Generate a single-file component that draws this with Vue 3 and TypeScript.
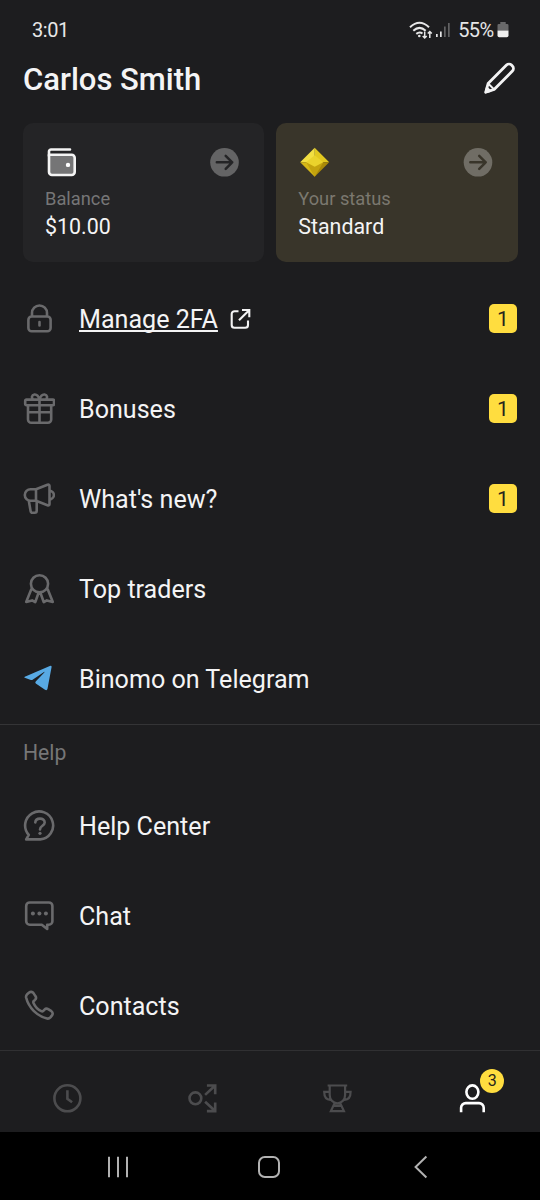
<script setup lang="ts">
interface MenuItem {
  label: string
  icon: string
  badge?: number
  external?: boolean
}

const mainItems: MenuItem[] = [
  { label: 'Manage 2FA', icon: 'lock', badge: 1, external: true },
  { label: 'Bonuses', icon: 'gift', badge: 1 },
  { label: "What's new?", icon: 'megaphone', badge: 1 },
  { label: 'Top traders', icon: 'award' },
  { label: 'Binomo on Telegram', icon: 'telegram' },
]

const helpItems: MenuItem[] = [
  { label: 'Help Center', icon: 'help' },
  { label: 'Chat', icon: 'chat' },
  { label: 'Contacts', icon: 'phone' },
]

const sections = [
  { title: '', items: mainItems },
  { title: 'Help', items: helpItems },
]

const icons: Record<string, string> = {
  lock: 'M9 13.5V10a7.5 7.5 0 0 1 15 0v3.5M8.7 13.5h15.6a3.3 3.3 0 0 1 3.3 3.3v8.2a3.3 3.3 0 0 1-3.3 3.3H8.7a3.3 3.3 0 0 1-3.3-3.3v-8.2a3.3 3.3 0 0 1 3.3-3.3ZM16.5 19v3.5',
  gift: 'M3.4 6.6h26.4a1.2 1.2 0 0 1 1.2 1.2v3.3a1.2 1.2 0 0 1-1.2 1.2H3.4a1.2 1.2 0 0 1-1.2-1.2V7.8a1.2 1.2 0 0 1 1.2-1.2ZM5 12.3v14.2a3.3 3.3 0 0 0 3.3 3.3h16.6a3.3 3.3 0 0 0 3.3-3.3V12.3M16.5 6.6v23.2M5 19.2h23.2M16.5 6.6C15.5 3 13.5 1.3 11.4 1.5 8.7 1.8 8.2 5 10.2 6.6M16.5 6.6c1-3.6 3-5.3 5.1-5.1 2.7.3 3.2 3.5 1.2 5.1',
  megaphone: 'M13 6.2H7.6a5.8 5.8 0 0 0 0 11.6H13ZM13 6.2l11.5-4.4q2-.6 2 1.3v17.8q0 1.9-2 1.3L13 17.8M26.5 7.5c2 .4 4.4 2.2 4.4 4.6s-2.4 4.2-4.4 4.6M5.8 17.8l1.8 10.3a2 2 0 0 0 2 1.7h2.1a2 2 0 0 0 2-2v-10',
  award: 'M16.5 2.2a8.6 8.6 0 1 1 0 17.2 8.6 8.6 0 0 1 0-17.2ZM8.4 16.1 3.2 28.9l5.9-1.5 3.1 1.8 3.4-9.4M24.6 16.1l5.2 12.8-5.9-1.5-3.1 1.8-3.4-9.4',
  telegram: 'M1.8 13.7 26.8 2.9q2-.7 1.8 1.2l-4.1 21.7q-.5 2.2-2.5 1L12.8 20.4q-1-.8-.1-1.8l8.6-9.2q.5-.7-.3-.5L9.6 16.7q-.8.5-1.7.2L1.7 14.8q-1-.4.1-1.1Z',
  help: 'M3.2 29.4 5.8 24.9A14 14 0 1 1 17.3 29.4H3.2ZM12.3 12.4c.4-5.2 9.4-5 9.4.1 0 3.3-4.7 3.2-4.7 6.9',
  chat: 'M6.7 2.5h19.2a3.5 3.5 0 0 1 3.5 3.5v15.2a3.5 3.5 0 0 1-3.5 3.5h-1.7v4.3l-5.4-4.3H6.7a3.5 3.5 0 0 1-3.5-3.5V6A3.5 3.5 0 0 1 6.7 2.5Z',
  phone: 'M4.1 4.3 6.2 2.5a2.9 2.9 0 0 1 4.1.4l2.1 3.2a2.9 2.9 0 0 1-.4 3.8l-1.2 1c-.5.6-.6 1.3-.3 2 1.6 3.7 4.2 6.5 7.8 8.3.7.4 1.5.2 2-.3l1.2-1.3a2.9 2.9 0 0 1 3.7-.4l3.2 2a2.9 2.9 0 0 1 .6 4.2l-1.6 2a3.6 3.6 0 0 1-3.3 1.1C13.7 25.9 5.7 17.7 3.1 7.5a3.6 3.6 0 0 1 1-3.2Z',
}
</script>

<template>
  <div class="screen">
    <header class="status-bar">
      <span class="time">3:01</span>
      <div class="status-right">
        <svg class="wifi" width="25" height="20" viewBox="0 0 25 20" fill="none" stroke="#e6e6e7" stroke-width="2">
          <path d="M1 7.2Q10.5-1.6 20 7.2M4.3 10.7q6.2-5.7 12.4 0M7.3 13.9q3.2-2.6 6.2-.4" />
          <circle cx="10.3" cy="16" r="1.3" fill="#e6e6e7" stroke="none" />
          <path d="M15.7 11.5v6.5m-2-2 2 2 2-2M20.8 18v-6.5m-2 2 2-2 2 2" stroke-width="1.5" />
        </svg>
        <svg class="signal" width="16" height="18" viewBox="0 0 16 18">
          <path d="M1 13h1.7v3H1zM5 10.5h1.7V16H5z" fill="#e6e6e7" />
          <path d="M9 5.500h1.700V16H9zM13 2h1.700v14H13z" fill="#626263" />
        </svg>
        <span class="percent">55%</span>
        <svg class="battery" width="12" height="16" viewBox="0 0 12 16">
          <path d="M3.3 0h5.4v2h1.5a1.3 1.3 0 0 1 1.3 1.3V8.5H.5V3.3A1.3 1.3 0 0 1 1.8 2h1.5Z" fill="#69696a" />
          <path d="M.5 8.5h11v5a1.7 1.7 0 0 1-1.7 1.7H2.2A1.7 1.7 0 0 1 .5 13.5Z" fill="#efefef" />
        </svg>
      </div>
    </header>

    <div class="profile">
      <h1>Carlos Smith</h1>
      <svg class="edit" width="34" height="34" viewBox="0 0 34 34" fill="none" stroke="#f3f3f4" stroke-width="2.8" stroke-linejoin="round">
        <path d="m2.7 30.300 2.400-8.800L23.500 3.100a3.600 3.600 0 0 1 5 0l.9.9a3.600 3.600 0 0 1 0 5L11.100 27.400Z" />
        <path d="m5.100 21.500 6 5.900M2.700 30.300l1.200-4.700 3.500 3.400Z" stroke-width="2" />
      </svg>
    </div>

    <div class="cards">
      <section class="card">
        <div class="card-top">
          <svg width="32" height="32" viewBox="0 0 32 32" fill="none" stroke="#f4f4f4" stroke-width="2.6" stroke-linecap="round" stroke-linejoin="round">
            <path d="M25 3.500H6a2 2 0 0 0-2 2V10" />
            <path d="M4 8.800h22.700a3 3 0 0 1 3 3V26a3 3 0 0 1-3 3H7a3 3 0 0 1-3-3Z" fill="#757576" />
            <circle cx="23" cy="18.900" r="2.200" fill="#fff" stroke="none" />
          </svg>
          <svg class="go" width="30" height="30" viewBox="0 0 30 30">
            <circle cx="15.500" cy="15.300" r="14.300" fill="#646465" />
            <path d="M7.800 15.300h15.400m-6.500-6.500 6.500 6.500-6.500 6.500" fill="none" stroke="#242426" stroke-width="2.500" stroke-linecap="round" stroke-linejoin="round" />
          </svg>
        </div>
        <p class="caption">Balance</p>
        <p class="value">$10.00</p>
      </section>
      <section class="card status">
        <div class="card-top">
          <svg width="32" height="32" viewBox="0 0 32 32">
            <path d="M16.700 1.700 31.200 16.200H16.700Z" fill="#e2c81f" />
            <path d="M16.700 1.700 2.200 16.200h14.500Z" fill="#f2df42" />
            <path d="M2.200 16.200 16.700 30.700V16.200Z" fill="#d6b817" />
            <path d="M31.200 16.200 16.700 30.700V16.200Z" fill="#a98a09" />
            <path d="M16.700 19 8.100 16.200l8.600 14.500 8.600-14.500Z" fill="#c3a30e" />
            <path d="m16.700 9.300 8.600 6.900-8.600 4.500-8.600-4.500Z" fill="#ead32c" />
          </svg>
          <svg class="go" width="30" height="30" viewBox="0 0 30 30">
            <circle cx="15" cy="15.300" r="14.300" fill="#706d65" />
            <path d="M7.300 15.300h15.400m-6.500-6.500 6.500 6.500-6.500 6.500" fill="none" stroke="#39352a" stroke-width="2.500" stroke-linecap="round" stroke-linejoin="round" />
          </svg>
        </div>
        <p class="caption">Your status</p>
        <p class="value">Standard</p>
      </section>
    </div>

    <main>
      <section v-for="section in sections" :key="section.title" class="group">
        <h2 v-if="section.title">{{ section.title }}</h2>
        <div v-for="item in section.items" :key="item.label" class="row">
          <svg class="row-icon" :class="item.icon" width="32" height="32" viewBox="0 0 32 32">
            <path :d="icons[item.icon]" />
            <circle v-if="item.icon === 'help'" class="dot" cx="17" cy="23.300" r="1.600" />
            <g v-if="item.icon === 'chat'" class="dot">
              <circle cx="9.900" cy="13.600" r="2" />
              <circle cx="16.400" cy="13.600" r="2" />
              <circle cx="22.900" cy="13.600" r="2" />
            </g>
          </svg>
          <span class="label" :class="{ link: item.external }">{{ item.label }}</span>
          <svg v-if="item.external" class="external" width="22" height="22" viewBox="0 0 22 22" fill="none" stroke="#f2f2f3" stroke-width="2.1">
            <path d="M9.500 3.200H5.500A2.800 2.800 0 0 0 2.700 6v11A2.800 2.800 0 0 0 5.500 19.800h10.700a2.800 2.800 0 0 0 2.800-2.800v-4.500M13 2h7.300v7.300M20.100 2.200 10 12.300" />
          </svg>
          <span v-if="item.badge" class="badge">{{ item.badge }}</span>
        </div>
      </section>
    </main>

    <nav class="tabs">
      <div class="tab">
        <svg width="32" height="32" viewBox="-0.4 -0.3 32 32">
          <circle cx="16" cy="16" r="13" />
          <path d="M16 8v8.500l4.700 3.500" />
        </svg>
      </div>
      <div class="tab">
        <svg width="32" height="32" viewBox="-0.4 -0.3 32 32">
          <circle cx="9" cy="16" r="5.900" />
          <path d="M20.500 3.200h8.300v8.700M28.500 3.500 18.700 12.600M20.500 28.800h8.300v-8.700M28.500 28.500 18.700 19.400" />
        </svg>
      </div>
      <div class="tab">
        <svg class="trophy" width="32" height="32" viewBox="-0.4 -0.3 32 32">
          <path d="M6.200 3.200h19.600M8.300 3.200v9.500c0 4.500 3.200 8.300 7.700 8.300s7.700-3.800 7.700-8.300V3.200M8.300 9.500H2.800c0 4.600 1.300 8 6.200 8M23.700 9.500h5.500c0 4.600-1.300 8-6.200 8M13.200 21l-1.200 2.500-2.500 5.300h13l-2.500-5.300-1.200-2.500M11.800 23.500h8.400" />
        </svg>
      </div>
      <div class="tab active">
        <svg width="32" height="32" viewBox="-0.4 -0.3 32 32">
          <ellipse cx="16" cy="9.800" rx="6" ry="6.700" />
          <path d="M4.700 30v-4.500a4.700 4.700 0 0 1 4.700-4.700h13.200a4.700 4.700 0 0 1 4.700 4.700V30" />
        </svg>
        <span class="count">3</span>
      </div>
    </nav>

    <footer class="system">
      <svg width="30" height="30" viewBox="0 0 30 30"><path d="M6 4.700v20.600M15 4.700v20.600M24 4.700v20.600" /></svg>
      <svg width="30" height="30" viewBox="0 0 30 30"><rect x="5" y="5" width="20" height="20" rx="5.800" /></svg>
      <svg width="30" height="30" viewBox="0 0 30 30"><path d="M21.400 4.500 10.600 15l10.800 10.500" /></svg>
    </footer>
  </div>
</template>

<style>
html,
body {
  background: #1d1d1f;
}
</style>

<style scoped>
.screen {
  display: flex;
  flex-direction: column;
  width: 540px;
  height: 1200px;
  overflow: hidden;
  background: #1d1d1f;
  color: #f4f4f5;
  font-family: Roboto, "Liberation Sans", sans-serif;
}
svg {
  display: block;
  flex: none;
}
h1,
h2,
p {
  margin: 0;
}
.status-bar {
  display: flex;
  align-items: center;
  justify-content: space-between;
  height: 60px;
  padding: 0 31px 0 32px;
  color: #e6e6e7;
}
.time {
  font-size: 20px;
  line-height: 24px;
  letter-spacing: -0.4px;
}
.status-right {
  display: flex;
  align-items: center;
}
.signal {
  margin-left: 1px;
}
.percent {
  margin: 0 3.5px 0 7px;
  font-size: 20px;
  line-height: 24px;
  letter-spacing: -0.6px;
}
.profile {
  display: flex;
  align-items: center;
  justify-content: space-between;
  height: 38px;
  padding: 0 23px;
}
h1 {
  padding-top: 2px;
  font-size: 31px;
  font-weight: 500;
  line-height: 38px;
}
.cards {
  display: grid;
  grid-template-columns: 1fr 1fr;
  gap: 11.5px;
  height: 139px;
  margin: 25px 22.5px 12px;
}
.card {
  box-sizing: border-box;
  padding: 23px 22.5px 0;
  border-radius: 10px;
  background: #242426;
}
.card.status {
  background: #39352a;
}
.card-top {
  display: flex;
  align-items: center;
  justify-content: space-between;
  padding-right: 2.5px;
}
.caption {
  margin-top: 9px;
  color: #767677;
  font-size: 18.3px;
  line-height: 24px;
}
.status .caption {
  color: #7b786f;
}
.value {
  margin-top: 3px;
  font-size: 21.4px;
  line-height: 26px;
}
.group + .group {
  box-sizing: border-box;
  height: 326px;
  border-top: 1px solid #343436;
}
h2 {
  height: 56px;
  padding-left: 23px;
  color: #767677;
  font-size: 21.2px;
  font-weight: 400;
  line-height: 56px;
}
.row {
  display: flex;
  align-items: center;
  height: 90px;
  padding: 0 23px;
}
.row-icon {
  margin-right: 24px;
  fill: none;
  stroke: #6a6a6c;
  stroke-width: 2.6px;
  stroke-linecap: round;
  stroke-linejoin: round;
}
.row-icon.telegram {
  fill: #58aae4;
  stroke: none;
}
.dot {
  fill: #6a6a6c;
  stroke: none;
}
.label {
  padding-top: 2px;
  font-size: 25.1px;
  line-height: 30px;
}
.link {
  text-decoration: underline;
  text-decoration-thickness: 1.5px;
  text-underline-offset: 2px;
  text-decoration-skip-ink: none;
}
.external {
  margin-left: 11px;
}
.badge {
  width: 28px;
  height: 29px;
  margin: 0 0 1px auto;
  border-radius: 5px;
  background: #ffdd3f;
  color: #27251d;
  font-size: 21px;
  line-height: 30px;
  text-align: center;
}
.tabs {
  display: grid;
  grid-template-columns: repeat(4, 1fr);
  box-sizing: border-box;
  height: 82px;
  padding: 31px 1px 0 0;
  border-top: 1px solid #303032;
}
.tab {
  position: relative;
  display: flex;
  justify-content: center;
}
.tab svg {
  fill: none;
  stroke: #4c4c4e;
  stroke-width: 2.6px;
}
.tab .trophy {
  stroke-width: 2.2px;
}
.tab.active svg {
  stroke: #fff;
}
.count {
  position: absolute;
  top: -13px;
  left: 76px;
  width: 24px;
  height: 24px;
  border-radius: 50%;
  background: #ffdd3f;
  color: #27251d;
  font-size: 16px;
  line-height: 24px;
  text-align: center;
}
.system {
  display: grid;
  grid-template-columns: repeat(3, 151px);
  align-items: center;
  justify-items: center;
  height: 68px;
  padding: 2px 0 0 42.5px;
  box-sizing: border-box;
  background: #000;
}
.system svg {
  fill: none;
  stroke: #b2b2b2;
  stroke-width: 2px;
}
</style>
